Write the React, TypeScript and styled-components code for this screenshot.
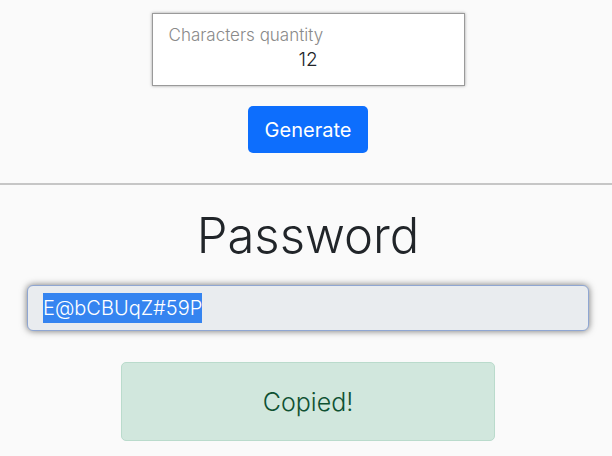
import React from "react";
import styled, { createGlobalStyle } from "styled-components";

const GlobalStyle = createGlobalStyle`
  html, body {
    margin: 0;
    padding: 0;
    background: #fafafa;
    font-family: Inter, "Noto Sans", "Liberation Sans", sans-serif;
    font-weight: 300;
    color: #212529;
    overflow: hidden;
  }
  * {
    box-sizing: border-box;
  }
`;

const Page = styled.div`
  display: flex;
  flex-direction: column;
  width: 616px;
  min-height: 456px;
`;

const GeneratorSection = styled.section`
  display: flex;
  flex-direction: column;
  align-items: center;
  padding-top: 13px;
  gap: 20px;
`;

const QuantityBox = styled.div`
  width: 313px;
  height: 73px;
  background: #ffffff;
  border: 1px solid #9a9a9a;
  box-shadow: 0 0 3px rgba(0, 0, 0, 0.35);
  display: flex;
  flex-direction: column;
  padding: 11px 16px 0;
`;

const QuantityLabel = styled.label`
  font-size: 17px;
  line-height: 20px;
  color: #8a8a8a;
`;

const QuantityValue = styled.div`
  text-align: center;
  font-size: 19px;
  line-height: 30px;
  color: #212529;
`;

const GenerateButton = styled.button`
  width: 120px;
  height: 47px;
  border: none;
  border-radius: 5px;
  background: #0d6efd;
  color: #ffffff;
  font-family: inherit;
  font-weight: 400;
  font-size: 20px;
  cursor: pointer;
`;

const Divider = styled.hr`
  margin: 30px 0 0;
  border: none;
  border-top: 2px solid #c6c6c6;
`;

const ResultSection = styled.section`
  display: flex;
  flex-direction: column;
  align-items: center;
`;

const Heading = styled.h1`
  margin: 20px 0 0;
  font-size: 49px;
  font-weight: 300;
  line-height: 62px;
  color: #212529;
`;

const PasswordField = styled.div`
  align-self: stretch;
  margin: 18px 27px 0;
  height: 46px;
  background: #e9ecef;
  border: 1px solid #8fa6d2;
  border-radius: 6px;
  box-shadow: 0 0 7px rgba(0, 0, 0, 0.55);
  display: flex;
  align-items: center;
  padding-left: 15px;
  font-size: 20px;
  font-weight: 300;
`;

const Selected = styled.span`
  background: #3584f0;
  color: #ffffff;
  line-height: 30px;
`;

const Alert = styled.div`
  margin-top: 31px;
  width: 374px;
  height: 79px;
  background: #d1e7dd;
  border: 1px solid #badbcc;
  border-radius: 5px;
  color: #0f5132;
  font-size: 25px;
  display: flex;
  align-items: center;
  justify-content: center;
`;

const App = () => {
  return (
    <Page>
      <GlobalStyle />
      <GeneratorSection>
        <QuantityBox>
          <QuantityLabel>Characters quantity</QuantityLabel>
          <QuantityValue>12</QuantityValue>
        </QuantityBox>
        <GenerateButton>Generate</GenerateButton>
      </GeneratorSection>
      <Divider />
      <ResultSection>
        <Heading>Password</Heading>
        <PasswordField>
          <Selected>E@bCBUqZ#59P</Selected>
        </PasswordField>
        <Alert>Copied!</Alert>
      </ResultSection>
    </Page>
  );
};

export default App;
